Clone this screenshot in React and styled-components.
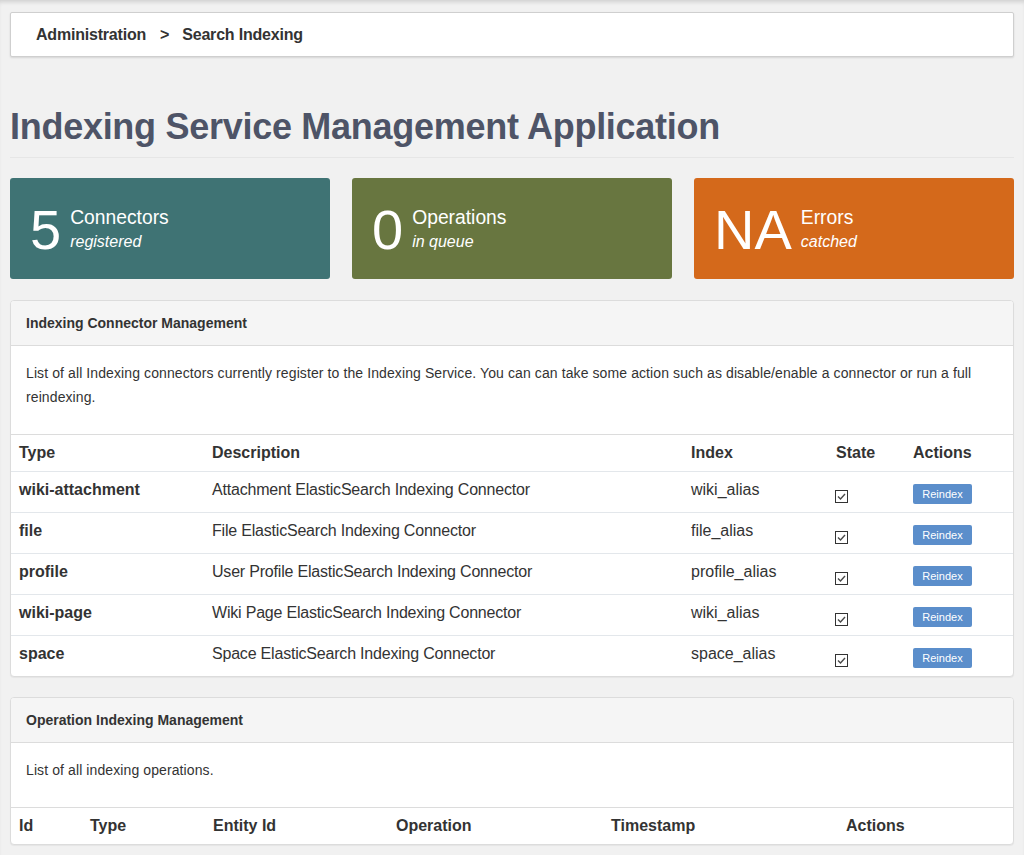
import React from "react";
import styled, { createGlobalStyle } from "styled-components";

const GlobalStyle = createGlobalStyle`
  html, body { margin: 0; padding: 0; background: #f1f1f1; }
  body {
    font-family: "Liberation Sans", Arial, Helvetica, sans-serif;
    color: #333;
    font-size: 14px;
  }
  * { box-sizing: border-box; }
`;

const Page = styled.div`
  min-height: 855px;
  padding: 12px 10px 20px;
  box-shadow: inset 0 4px 4px -2px rgba(0, 0, 0, 0.14);
`;

const Breadcrumb = styled.nav`
  height: 45px;
  background: #fff;
  border: 1px solid #cfcfcf;
  border-radius: 2px;
  box-shadow: 0 1px 2px rgba(0, 0, 0, 0.12);
  display: flex;
  align-items: center;
  padding: 0 25px;
  font-size: 16px;
  letter-spacing: -0.2px;
  font-weight: bold;
  color: #333;
`;

const Sep = styled.span`
  margin: 0 13px 0 14px;
`;

const Title = styled.h1`
  margin: 50px 0 20px;
  padding-bottom: 10px;
  border-bottom: 1px solid #e6e6e6;
  font-size: 36px;
  letter-spacing: -0.28px;
  line-height: 1.1;
  font-weight: bold;
  color: #4e5467;
`;

const Stats = styled.div`
  display: grid;
  grid-template-columns: repeat(3, 320px);
  justify-content: space-between;
  margin-bottom: 21px;
`;

const StatCard = styled.div`
  height: 101px;
  border-radius: 3px;
  background: ${(p) => p.$bg};
  color: #fff;
  display: flex;
  align-items: center;
  padding: 4px 20px 0;
  gap: 9px;
`;

const StatNumber = styled.div`
  font-size: 56px;
  line-height: 56px;
`;

const StatLabel = styled.div`
  display: flex;
  flex-direction: column;
  margin-top: 2px;
`;

const StatName = styled.span`
  font-size: 19.3px;
  line-height: 20px;
`;

const StatSub = styled.span`
  margin-top: 2px;
  font-size: 16px;
  line-height: 24px;
  font-style: italic;
`;

const Panel = styled.section`
  background: #fff;
  border: 1px solid #dcdcdc;
  border-radius: 4px;
  box-shadow: 0 1px 1px rgba(0, 0, 0, 0.05);
  margin-bottom: 20px;
  overflow: hidden;
`;

const PanelHeading = styled.div`
  background: #f5f5f5;
  border-bottom: 1px solid #dcdcdc;
  padding: 10px 15px;
  font-size: 14px;
  line-height: 24px;
  font-weight: bold;
  color: #333;
`;

const PanelBody = styled.div`
  padding: 15px 15px 25px;
  font-size: 14px;
  letter-spacing: 0.1px;
  line-height: 24px;
  color: #333;
`;

const Row = styled.div`
  display: grid;
  grid-template-columns: ${(p) => p.$cols};
  height: ${(p) => (p.$head ? 37 : 41)}px;
  border-top: 1px solid ${(p) => (p.$head ? "#dcdcdc" : "#e3e7eb")};
  font-size: 16px;
  line-height: 20px;
`;

const Cell = styled.div`
  padding: 8px;
  font-weight: ${(p) => (p.$bold ? "bold" : "normal")};
  letter-spacing: ${(p) => (p.$tight ? "-0.2px" : "0")};
  white-space: nowrap;
`;

const Check = styled.span`
  display: block;
  width: 13px;
  height: 13px;
  margin-top: 10px;
  margin-left: -1px;
  border: 1px solid #333;
  background: #fff;
  svg {
    display: block;
  }
`;

const Button = styled.button`
  display: block;
  margin-top: 4px;
  width: 59px;
  height: 20px;
  padding: 0;
  border: none;
  border-radius: 2px;
  background: #5b8ecb;
  color: #fff;
  font-family: "Liberation Sans", Arial, sans-serif;
  font-size: 11px;
  line-height: 20px;
  cursor: pointer;
`;

const connectorCols = "193px 479px 145px 77px 108px";
const operationCols = "71px 123px 183px 215px 235px 175px";

const connectors = [
  ["wiki-attachment", "Attachment ElasticSearch Indexing Connector", "wiki_alias"],
  ["file", "File ElasticSearch Indexing Connector", "file_alias"],
  ["profile", "User Profile ElasticSearch Indexing Connector", "profile_alias"],
  ["wiki-page", "Wiki Page ElasticSearch Indexing Connector", "wiki_alias"],
  ["space", "Space ElasticSearch Indexing Connector", "space_alias"],
];

const CheckBox = () => (
  <Check>
    <svg width="11" height="11" viewBox="0 0 11 11">
      <path d="M2 5.5 L4.5 8 L9 3" fill="none" stroke="#4a4a4a" strokeWidth="1.4" />
    </svg>
  </Check>
);

export default function App() {
  return (
    <>
      <GlobalStyle />
      <Page>
        <Breadcrumb>
          <span>Administration</span>
          <Sep>&gt;</Sep>
          <span>Search Indexing</span>
        </Breadcrumb>

        <Title>Indexing Service Management Application</Title>

        <Stats>
          <StatCard $bg="#3f7374">
            <StatNumber>5</StatNumber>
            <StatLabel>
              <StatName>Connectors</StatName>
              <StatSub>registered</StatSub>
            </StatLabel>
          </StatCard>
          <StatCard $bg="#687640">
            <StatNumber>0</StatNumber>
            <StatLabel>
              <StatName>Operations</StatName>
              <StatSub>in queue</StatSub>
            </StatLabel>
          </StatCard>
          <StatCard $bg="#d4691b">
            <StatNumber>NA</StatNumber>
            <StatLabel>
              <StatName>Errors</StatName>
              <StatSub>catched</StatSub>
            </StatLabel>
          </StatCard>
        </Stats>

        <Panel>
          <PanelHeading>Indexing Connector Management</PanelHeading>
          <PanelBody>
            List of all Indexing connectors currently register to the Indexing Service. You can can take
            some action such as disable/enable a connector or run a full reindexing.
          </PanelBody>
          <Row $head $cols={connectorCols}>
            <Cell $bold>Type</Cell>
            <Cell $bold>Description</Cell>
            <Cell $bold>Index</Cell>
            <Cell $bold>State</Cell>
            <Cell $bold>Actions</Cell>
          </Row>
          {connectors.map(([type, desc, index]) => (
            <Row key={type} $cols={connectorCols}>
              <Cell $bold>{type}</Cell>
              <Cell $tight>{desc}</Cell>
              <Cell>{index}</Cell>
              <Cell>
                <CheckBox />
              </Cell>
              <Cell>
                <Button>Reindex</Button>
              </Cell>
            </Row>
          ))}
        </Panel>

        <Panel>
          <PanelHeading>Operation Indexing Management</PanelHeading>
          <PanelBody>List of all indexing operations.</PanelBody>
          <Row $head $cols={operationCols}>
            <Cell $bold>Id</Cell>
            <Cell $bold>Type</Cell>
            <Cell $bold>Entity Id</Cell>
            <Cell $bold>Operation</Cell>
            <Cell $bold>Timestamp</Cell>
            <Cell $bold>Actions</Cell>
          </Row>
        </Panel>
      </Page>
    </>
  );
}
